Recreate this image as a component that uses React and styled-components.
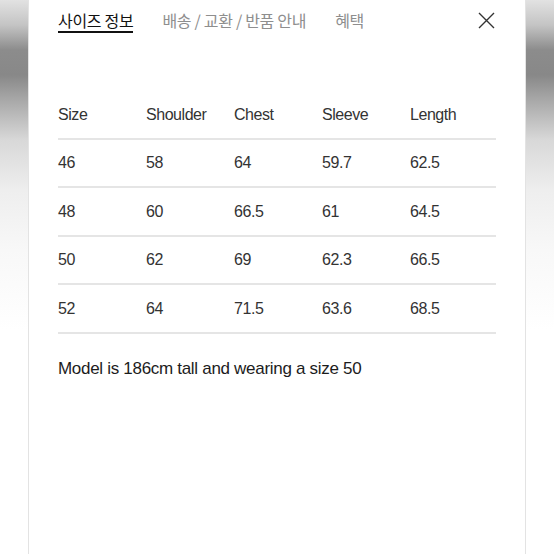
import React from "react";
import styled, { createGlobalStyle } from "styled-components";

const Global = createGlobalStyle`
  html, body { margin: 0; padding: 0; }
  body {
    min-height: 554px;
    background: linear-gradient(180deg, #e2e2e2 0px, #c4c4c4 25px, #8c8c8c 50px, #888 75px, #a8a8a8 100px, #d8d8d8 140px, #eeeeee 190px, #f8f8f8 250px, #ffffff 330px);
    font-family: "Liberation Sans", Arial, sans-serif;
  }
`;

const Panel = styled.div`
  box-sizing: border-box;
  margin: 0 28px;
  min-height: 554px;
  background: #fff;
  border-left: 1px solid #e3e3e3;
  border-right: 1px solid #e3e3e3;
  padding: 0 29px;
`;

const Header = styled.div`
  display: flex;
  align-items: flex-start;
`;

const Tabs = styled.div`
  display: flex;
  gap: 29px;
`;

const Tab = styled.div`
  font-family: "Noto Sans CJK KR", sans-serif;
  font-size: 16px;
  line-height: 22px;
  letter-spacing: -0.3px;
  padding-top: 9px;
  color: ${p => (p.$active ? "#111" : "#8e8e8e")};
  border-bottom: 2px solid ${p => (p.$active ? "#111" : "transparent")};
`;

const Close = styled.button`
  margin-left: auto;
  margin-top: 12px;
  margin-right: 1px;
  width: 17px;
  height: 17px;
  padding: 0;
  border: 0;
  background: none;
  display: flex;
`;

const Table = styled.div`
  margin-top: 58px;
`;

const Row = styled.div`
  box-sizing: border-box;
  display: grid;
  grid-template-columns: repeat(5, 88px);
  align-items: center;
  height: 48.5px;
  border-bottom: 2px solid #e5e5e5;
  padding-top: 1px;
`;

const Cell = styled.div`
  font-size: 16px;
  letter-spacing: -0.45px;
  color: #333;
  line-height: 20px;
`;

const Note = styled.p`
  margin: 23px 0 0;
  font-size: 17px;
  line-height: 24px;
  letter-spacing: -0.3px;
  color: #1c1c1c;
`;

const head = ["Size", "Shoulder", "Chest", "Sleeve", "Length"];
const rows = [
  ["46", "58", "64", "59.7", "62.5"],
  ["48", "60", "66.5", "61", "64.5"],
  ["50", "62", "69", "62.3", "66.5"],
  ["52", "64", "71.5", "63.6", "68.5"],
];

export default function App() {
  return (
    <>
      <Global />
      <Panel>
        <Header>
          <Tabs>
            <Tab $active>사이즈 정보</Tab>
            <Tab>배송 / 교환 / 반품 안내</Tab>
            <Tab>혜택</Tab>
          </Tabs>
          <Close aria-label="닫기">
            <svg width="17" height="17" viewBox="0 0 17 17">
              <path d="M1 1 L16 16 M16 1 L1 16" stroke="#333" strokeWidth="1.4" fill="none" />
            </svg>
          </Close>
        </Header>
        <Table>
          <Row>
            {head.map(h => (
              <Cell key={h}>{h}</Cell>
            ))}
          </Row>
          {rows.map(r => (
            <Row key={r[0]}>
              {r.map((c, i) => (
                <Cell key={i}>{c}</Cell>
              ))}
            </Row>
          ))}
        </Table>
        <Note>Model is 186cm tall and wearing a size 50</Note>
      </Panel>
    </>
  );
}
